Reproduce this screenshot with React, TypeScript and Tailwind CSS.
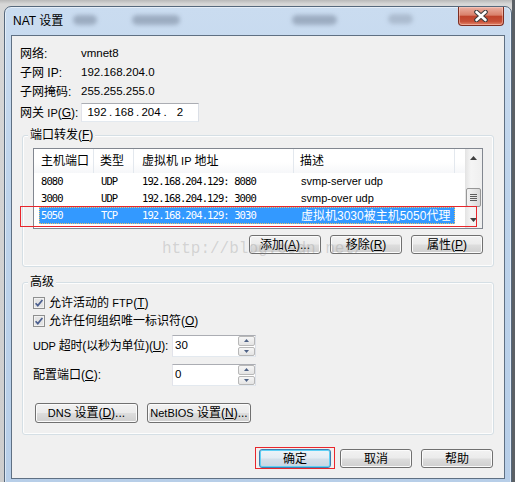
import React from 'react';

const SANS = "font-['Liberation_Sans','Noto_Sans_CJK_SC',sans-serif]";
const MONO = "font-['DejaVu_Sans_Mono','Noto_Sans_CJK_SC',monospace]";

/** accelerator letter in brackets, underlined like a Win32 dialog */
const Acc = ({ k }: { k: string }) => (
  <>
    (<span className="underline decoration-1 underline-offset-[1px]">{k}</span>)
  </>
);

/** latin run, a touch smaller than the CJK text around it */
const Lt = ({ children }: { children: React.ReactNode }) => <span className="text-[11px]">{children}</span>;

interface BtnProps {
  children: React.ReactNode;
  w: string;
  h?: string;
  def?: boolean;
}

const Btn: React.FC<BtnProps> = ({ children, w, h = 'h-[19px]', def }) => (
  <div
    className={`${w} ${h} flex shrink-0 items-center justify-center whitespace-nowrap rounded-[3px] border text-[12px] leading-none text-black ${
      def
        ? 'border-[#3c7fb1] bg-[linear-gradient(#edf4f9_0%,#e2ecf3_48%,#d3e0ea_52%,#c6d6e2_100%)] shadow-[inset_0_0_0_1px_#5fd0f5]'
        : 'border-[#707070] bg-[linear-gradient(#f2f2f2_0%,#ebebeb_48%,#dddddd_52%,#cfcfcf_100%)] shadow-[inset_0_0_0_1px_#fbfbfb]'
    }`}
  >
    {children}
  </div>
);

const Check = () => (
  <svg width="12" height="12" viewBox="0 0 12 12" className="shrink-0">
    <rect x="0.5" y="0.5" width="11" height="11" fill="#f2f2f2" stroke="#8e8f8f" />
    <rect x="2" y="2" width="8" height="8" fill="#e4e4e4" />
    <path d="M2.6 6.2 4.8 8.6 9.4 3" fill="none" stroke="#4b5f8f" strokeWidth="1.7" />
  </svg>
);

const Arrow = ({ up, color = '#404040' }: { up?: boolean; color?: string }) => (
  <svg width="7" height="4" viewBox="0 0 7 4">
    <path d={up ? 'M0 4 3.5 0 7 4Z' : 'M0 0 7 0 3.5 4Z'} fill={color} />
  </svg>
);

const SpinBtn = ({ up }: { up?: boolean }) => (
  <div className="flex h-[10px] items-center justify-center rounded-[2px] border border-[#b8b8b8] bg-[linear-gradient(#f6f6f6,#e4e4e4)]">
    <svg width="5" height="3" viewBox="0 0 5 3">
      <path d={up ? 'M0 3 2.5 0 5 3Z' : 'M0 0 5 0 2.5 3Z'} fill="#4d6185" />
    </svg>
  </div>
);

const Spin = ({ value }: { value: string }) => (
  <div className="flex h-[22px] w-[84px] border border-[#abadb3] border-b-[#e3e9ef] border-l-[#e2e3ea] border-r-[#dbdfe6] bg-white">
    <div className="flex-1 pl-[2px] pt-[3px] text-[11.5px] leading-[13px]">{value}</div>
    <div className="flex w-[17px] flex-col gap-px">
      <SpinBtn up />
      <SpinBtn />
    </div>
  </div>
);

const rows = [
  { port: '8080', type: 'UDP', ip: '192.168.204.129: 8080', desc: 'svmp-server udp' },
  { port: '3000', type: 'UDP', ip: '192.168.204.129: 3000', desc: 'svmp-over udp' },
  { port: '5050', type: 'TCP', ip: '192.168.204.129: 3030', desc: '虚拟机3030被主机5050代理', sel: true },
];

const ListView = () => (
  <div className="flex h-[81px] border border-[#828790] bg-white">
    <div className="flex-1">
      <div className="flex h-[24px] bg-[linear-gradient(#ffffff,#ffffff_55%,#f6f7f9)] text-[12px]">
        <div className="flex w-[60px] items-center border-r border-[#e3e8ee] pl-[7px]">主机端口</div>
        <div className="flex w-[40px] items-center border-r border-[#e3e8ee] pl-[6px]">类型</div>
        <div className="flex w-[160px] items-center border-r border-[#e3e8ee] pl-[8px]">
          虚拟机 <Lt>&nbsp;IP&nbsp;</Lt> 地址
        </div>
        <div className="flex w-[161px] items-center border-r border-[#e3e8ee] pl-[6px]">描述</div>
      </div>
      {rows.map((r) => (
        <div key={r.port} className="flex h-[17px] pl-[5px]">
          <div
            className={`flex w-[416px] items-center ${
              r.sel ? 'border border-dotted border-[#f2c46a] bg-[#3399ff] text-white' : 'border border-transparent'
            }`}
          >
            <div className={`w-[55px] pl-[1px] text-[10.5px] tracking-[-0.9px] ${MONO}`}>{r.port}</div>
            <div className={`w-[40px] pl-[6px] text-[10.5px] tracking-[-0.9px] ${MONO}`}>{r.type}</div>
            <div className={`w-[160px] pl-[7px] text-[10.5px] tracking-[-0.9px] ${MONO}`}>{r.ip}</div>
            <div className={`w-[159px] pl-[6px] ${r.sel ? 'text-[12px]' : 'text-[11px]'}`}>{r.desc}</div>
          </div>
        </div>
      ))}
    </div>
    <div className="flex w-[17px] flex-col bg-[linear-gradient(90deg,#e3e3e3,#f5f5f5_35%,#efefef)]">
      <div className="flex h-[17px] items-center justify-center">
        <Arrow up />
      </div>
      <div className="flex-1 px-[1px] pt-[22px]">
        <div className="flex h-[19px] flex-col items-center justify-center gap-[1px] rounded-[2px] border border-[#979797] bg-[linear-gradient(90deg,#f4f4f4,#e6e6e6_50%,#d8d8d8)]">
          <div className="h-px w-[7px] bg-[#5c5c5c]" />
          <div className="h-px w-[7px] bg-[#5c5c5c]" />
          <div className="h-px w-[7px] bg-[#5c5c5c]" />
          <div className="h-px w-[7px] bg-[#5c5c5c]" />
        </div>
      </div>
      <div className="flex h-[17px] items-center justify-center">
        <Arrow />
      </div>
    </div>
  </div>
);

const CloseBtn = () => (
  <div className="mr-[1px] flex h-[19px] w-[46px] items-center justify-center rounded-b-[4px] border border-t-0 border-[#7d2e22] bg-[linear-gradient(#ecb0a2_0%,#d9806b_45%,#c0432c_52%,#c64f37_80%,#e4866b_100%)] shadow-[inset_0_0_0_1px_rgba(255,220,210,0.45)]">
    <svg width="14" height="12" viewBox="0 0 14 12">
      <path d="M2.5 2 11.5 10M11.5 2 2.5 10" stroke="#3b3b3b" strokeWidth="4.6" strokeLinecap="round" />
      <path d="M2.5 2 11.5 10M11.5 2 2.5 10" stroke="#ffffff" strokeWidth="2.6" strokeLinecap="round" />
    </svg>
  </div>
);

export default function App() {
  return (
    <div
      className={`relative h-[482px] w-[515px] overflow-hidden bg-[linear-gradient(180deg,#b9b9b9,#d7d7d7_4px,#cdcdcd)] pl-[4px] pt-[6px] text-black ${SANS}`}
    >
      <div className="absolute right-0 top-0 h-full w-[3px] bg-[#5b6065]" />

      <div className="flex h-[480px] w-[508px] flex-col rounded-t-[7px] border border-[#56687c] bg-[linear-gradient(180deg,#cadcf0_0%,#bdd3eb_40%,#b7cee8_100%)] px-[6px] shadow-[inset_0_0_0_1px_rgba(255,255,255,0.5)]">
        {/* title bar */}
        <div className="relative flex h-[28px] items-start justify-between">
          <div className="absolute left-[62px] top-[8px] h-[10px] w-[24px] rounded-full bg-[#7f8ea3] opacity-60 blur-[2px]" />
          <div className="absolute left-[121px] top-[8px] h-[10px] w-[48px] rounded-full bg-[#7f8ea3] opacity-60 blur-[2px]" />
          <div className="absolute left-[281px] top-[8px] h-[10px] w-[45px] rounded-full bg-[#7f8ea3] opacity-60 blur-[2px]" />
          <div className="absolute left-[377px] top-[7px] h-[10px] w-[25px] rounded-full bg-[#8f9db0] opacity-50 blur-[2px]" />
          <div className="relative pl-[2px] pt-[7px] text-[12px] leading-[14px]">NAT 设置</div>
          <CloseBtn />
        </div>

        {/* client area */}
        <div className="h-[444px] border border-[#5f7083] bg-[#f0f0f0]">
          <div className="pl-[8px] pt-[8px]">
            {[
              ['网络:', 'vmnet8'],
              ['子网 IP:', '192.168.204.0'],
              ['子网掩码:', '255.255.255.0'],
            ].map(([l, v]) => (
              <div key={l} className="flex h-[19px] items-center">
                <div className="w-[61px] text-[12px]">{l}</div>
                <div className="text-[11.5px]">{v}</div>
              </div>
            ))}
            <div className="mt-[2px] flex h-[19px] items-center">
              <div className="w-[61px] whitespace-nowrap text-[12px]">
                网关 <Lt>IP</Lt>
                <Acc k="G" />:
              </div>
              <div className="flex h-[19px] w-[118px] items-center border border-[#abadb3] border-b-[#e3e9ef] border-l-[#e2e3ea] border-r-[#dbdfe6] bg-white pl-[4px] text-[11.5px]">
                <span className="w-[22px] text-center">192</span>
                <span className="w-[5px] text-center">.</span>
                <span className="w-[22px] text-center">168</span>
                <span className="w-[5px] text-center">.</span>
                <span className="w-[22px] text-center">204</span>
                <span className="w-[6px] text-center">.</span>
                <span className="w-[24px] text-center">2</span>
              </div>
            </div>
          </div>

          {/* port forwarding */}
          <div className="relative mx-[10px] mt-[13px] h-[132px] rounded-[3px] border border-[#d5dfe5] px-[10px] pt-[12px] shadow-[inset_0_0_0_1px_#fdfdfd]">
            <div className="absolute left-[5px] top-[-9px] bg-[#f0f0f0] px-[2px] text-[12px] leading-[16px]">
              端口转发
              <Acc k="F" />
            </div>
            <ListView />
            <div className="mt-[6px] flex justify-end gap-[9px]">
              <Btn w="w-[72px]">
                添加
                <Acc k="A" />
                ...
              </Btn>
              <Btn w="w-[72px]">
                移除
                <Acc k="R" />
              </Btn>
              <Btn w="w-[72px]">
                属性
                <Acc k="P" />
              </Btn>
            </div>
          </div>

          {/* advanced */}
          <div className="relative mx-[10px] mt-[15px] h-[153px] rounded-[3px] border border-[#d5dfe5] pl-[10px] pt-[11px] shadow-[inset_0_0_0_1px_#fdfdfd]">
            <div className="absolute left-[5px] top-[-9px] bg-[#f0f0f0] px-[2px] text-[12px] leading-[16px]">高级</div>
            <div className="flex h-[18px] items-center gap-[4px] text-[12px]">
              <Check />
              <span>
                允许活动的 <Lt>FTP</Lt>
                <Acc k="T" />
              </span>
            </div>
            <div className="flex h-[18px] items-center gap-[4px] text-[12px]">
              <Check />
              <span>
                允许任何组织唯一标识符
                <Acc k="O" />
              </span>
            </div>
            <div className="mt-[5px] flex h-[22px] items-center">
              <div className="w-[139px] whitespace-nowrap text-[12px] tracking-[-0.2px]">
                <Lt>UDP</Lt> 超时(以秒为单位)
                <Acc k="U" />:
              </div>
              <Spin value="30" />
            </div>
            <div className="mt-[7px] flex h-[22px] items-center">
              <div className="w-[139px] text-[12px]">
                配置端口
                <Acc k="C" />:
              </div>
              <Spin value="0" />
            </div>
            <div className="mt-[17px] flex gap-[9px] pl-[2px]">
              <Btn w="w-[103px]" h="h-[20px]">
                <Lt>DNS</Lt>&nbsp;设置
                <Acc k="D" />
                ...
              </Btn>
              <Btn w="w-[104px]" h="h-[20px]">
                <Lt>NetBIOS</Lt>&nbsp;设置
                <Acc k="N" />
                ...
              </Btn>
            </div>
          </div>

          <div className="mt-[14px] flex justify-end gap-[9px] pr-[11px]">
            <Btn w="w-[72px]" def>
              确定
            </Btn>
            <Btn w="w-[72px]">取消</Btn>
            <Btn w="w-[72px]">帮助</Btn>
          </div>
        </div>
      </div>

      {/* annotation boxes drawn over the screenshot */}
      <div className="pointer-events-none absolute left-[20px] top-[206px] h-[21px] w-[457px] border border-[#e8262c]" />
      <div className="pointer-events-none absolute left-[255px] top-[447px] h-[22px] w-[80px] border border-[#e8262c]" />

      {/* blog watermark */}
      <div className="pointer-events-none absolute left-[162px] top-[239px] font-['Liberation_Mono',monospace] text-[16px] leading-[20px] text-[rgba(140,140,140,0.3)]">
        http://blog.csdn.net/
      </div>
    </div>
  );
}
